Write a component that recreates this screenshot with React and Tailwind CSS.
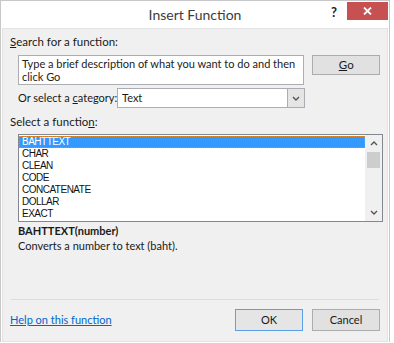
import React from "react";

const ui = { fontFamily: 'Lato, "Noto Sans", sans-serif' };
const tah = { fontFamily: '"Liberation Sans", Arial, sans-serif' };

export default function App() {
  const items = ["BAHTTEXT", "CHAR", "CLEAN", "CODE", "CONCATENATE", "DOLLAR", "EXACT"];
  return (
    <div className="w-[394px] h-[343px] bg-white overflow-hidden" style={ui}>
      <div className="w-[390px] h-[342px] border-x border-t border-[#c8c8c8] flex flex-col">
        {/* title bar */}
        <div className="h-[27px] flex items-start relative shrink-0">
          <div className="flex-1 text-center text-[14px] text-[#3c3c3c] pt-[5px] leading-[18px]">Insert Function</div>
          <div className="absolute left-[330px] top-[2px] text-[13px] font-bold text-[#222]">?</div>
          <div className="absolute left-[346px] top-[1px] w-[41px] h-[18px] bg-[#c75050] flex items-center justify-center">
            <svg width="9" height="8" viewBox="0 0 9 8">
              <path d="M1 0.5 L8 7.5 M8 0.5 L1 7.5" stroke="white" strokeWidth="1.8" />
            </svg>
          </div>
        </div>
        {/* client */}
        <div className="mx-[1px] flex-1 bg-[#f0f0f0] border border-[#e3e3e3] flex flex-col text-[11.5px] text-[#1a1a1a] px-[7px]">
          <div className="mt-[5px] leading-[16px]"><span className="underline">S</span>earch for a function:</div>
          <div className="flex mt-[5px] ml-[8px]">
            <div className="w-[288px] h-[30px] bg-white border border-[#abadb3] px-[3px] text-[11px] leading-[13px] pt-[1px] text-[#222] whitespace-nowrap">
              Type a brief description of what you want to do and then<br />click Go
            </div>
            <div className="ml-[8px] w-[68px] h-[20px] bg-[#e1e1e1] border border-[#adadad] flex items-center justify-center">
              <span className="underline">G</span>o
            </div>
          </div>
          <div className="flex items-center mt-[3px] ml-[8px] text-[11px]">
            <div className="w-[99px] whitespace-nowrap">Or select a <span className="underline">c</span>ategory:</div>
            <div className="w-[188px] h-[20px] bg-white border border-[#abadb3] flex items-center justify-between">
              <span className="pl-[4px]">Text</span>
              <div className="w-[17px] h-[18px] bg-[#e5e5e5] border-l border-[#abadb3] flex items-center justify-center">
                <svg width="8" height="5" viewBox="0 0 8 5"><path d="M1 1 L4 4 L7 1" stroke="#555" strokeWidth="1.4" fill="none" /></svg>
              </div>
            </div>
          </div>
          <div className="mt-[6px] leading-[16px]">Select a functio<span className="underline">n</span>:</div>
          <div className="ml-[8px] mt-[4px] w-[365px] h-[88px] bg-white border border-[#828790] flex">
            <div className="flex-1 flex flex-col pt-[1px]" style={tah}>
              {items.map((t, i) => (
                <div
                  key={t}
                  className={
                    i === 0
                      ? "h-[12px] bg-[#3399ff] text-white text-[10px] tracking-[-0.5px] leading-[11px] pl-[3px] outline outline-1 outline-dotted outline-[#e08a30] -outline-offset-1"
                      : "h-[12px] text-[#111] text-[10px] tracking-[-0.5px] leading-[12px] pl-[3px]"
                  }
                >
                  {t}
                </div>
              ))}
            </div>
            <div className="w-[17px] bg-[#f0f0f0] flex flex-col items-center">
              <div className="h-[17px] flex items-center justify-center">
                <svg width="8" height="5" viewBox="0 0 8 5"><path d="M1 4 L4 1 L7 4" stroke="#555" strokeWidth="1.4" fill="none" /></svg>
              </div>
              <div className="w-[13px] h-[16px] bg-[#cdcdcd]" />
              <div className="flex-1" />
              <div className="h-[17px] flex items-center justify-center">
                <svg width="8" height="5" viewBox="0 0 8 5"><path d="M1 1 L4 4 L7 1" stroke="#555" strokeWidth="1.4" fill="none" /></svg>
              </div>
            </div>
          </div>
          <div className="ml-[8px] mt-[1px] text-[11px] font-bold leading-[15px]">BAHTTEXT(number)</div>
          <div className="ml-[8px] text-[11px] leading-[15px]">Converts a number to text (baht).</div>
          <div className="flex-1" />
          <div className="h-px bg-[#dcdcdc] mx-[1px]" />
          <div className="flex items-center mt-[9px] mb-[10px] text-[11px]">
            <div className="flex-1 text-[#0066cc] underline">Help on this function</div>
            <div className="w-[68px] h-[22px] bg-[#e5e5e5] border border-[#5aa0e6] flex items-center justify-center">OK</div>
            <div className="ml-[9px] w-[68px] h-[22px] bg-[#e1e1e1] border border-[#adadad] flex items-center justify-center">Cancel</div>
          </div>
        </div>
      </div>
    </div>
  );
}
